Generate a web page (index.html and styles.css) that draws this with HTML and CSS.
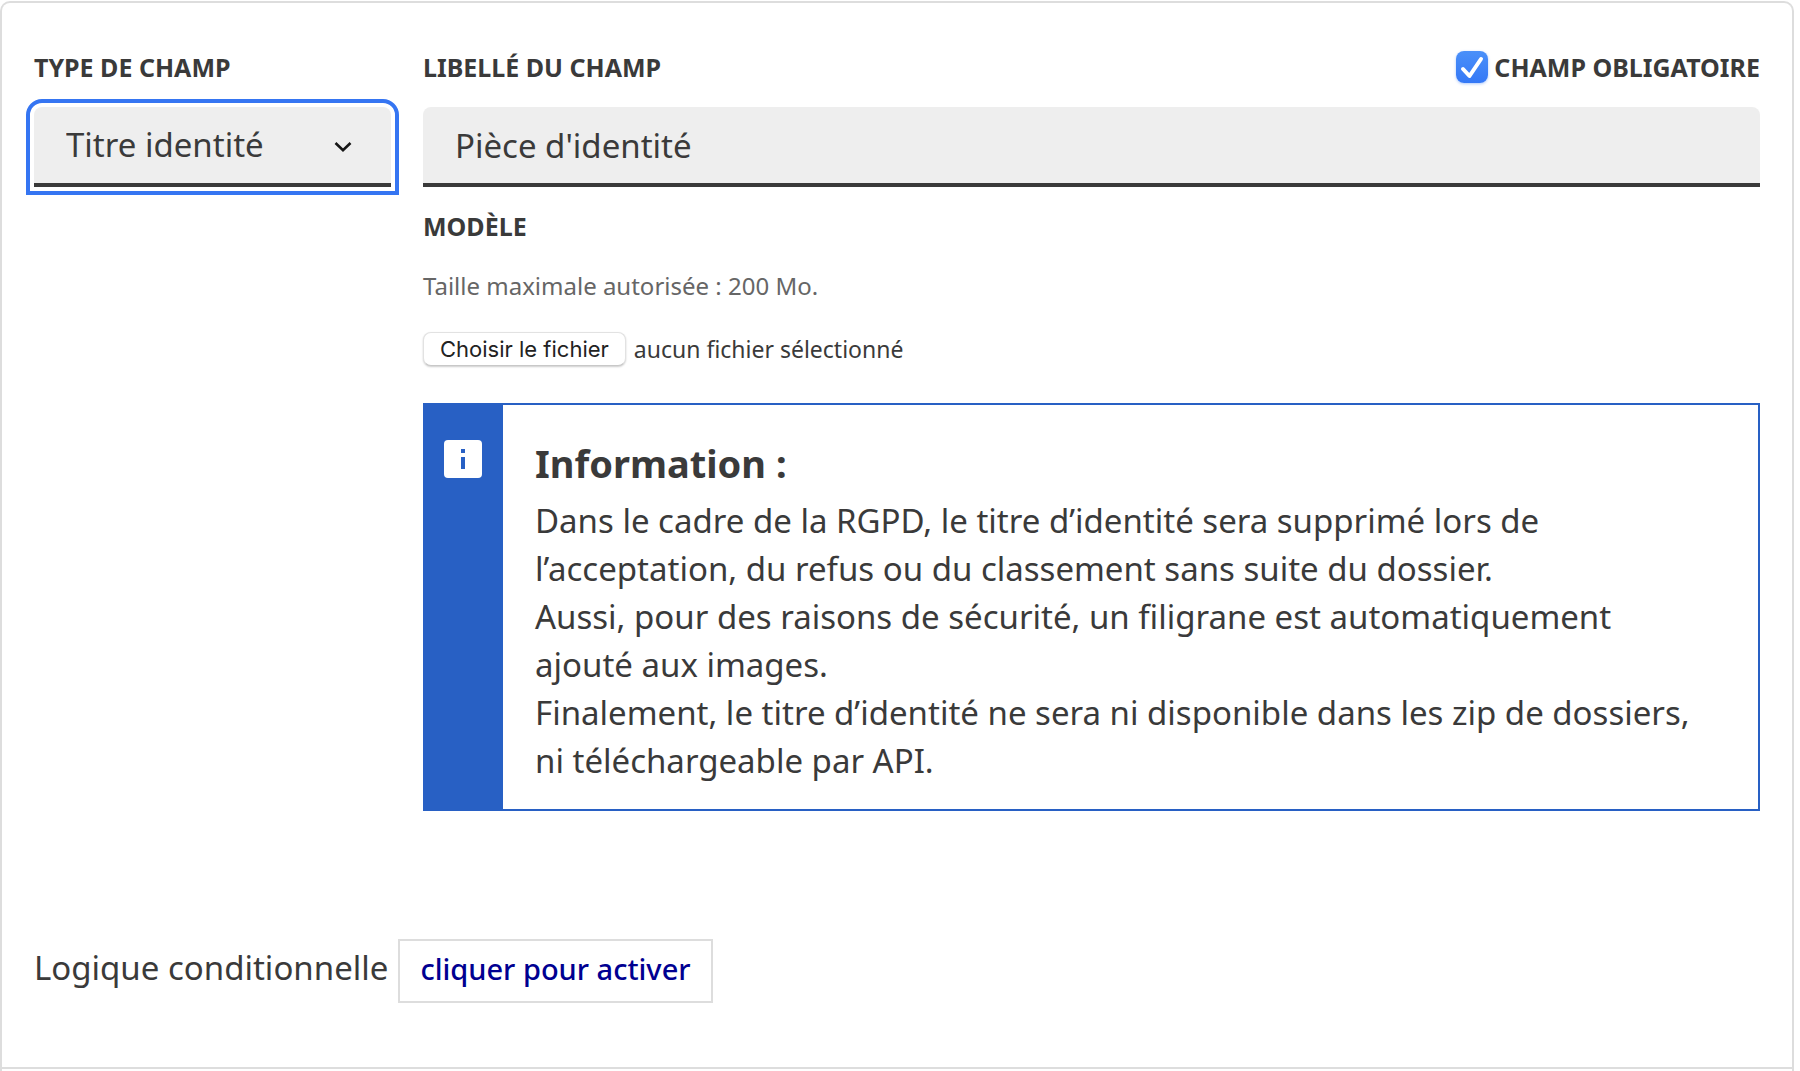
FILE: index.html
```html
<!DOCTYPE html>
<html lang="fr">
<head>
<meta charset="utf-8">
<meta name="viewport" content="width=device-width, initial-scale=1">
<title>Éditeur de champ</title>
<link rel="stylesheet" href="styles.css">
</head>
<body>
<form class="champ">
  <div class="champ-body">
    <div class="columns">
      <div class="column-type">
        <div class="label-row"><label class="label" for="type">Type de champ</label></div>
        <div class="select-wrap">
          <select class="field select" id="type">
            <option>Titre identité</option>
          </select>
          <svg class="chevron" viewBox="0 0 18 12" aria-hidden="true"><path d="M1.500 2L9 9.200 16.500 2" fill="none" stroke="#161616" stroke-width="2.600"/></svg>
        </div>
      </div>
      <div class="column-main">
        <div class="label-row">
          <label class="label" for="libelle">Libellé du champ</label>
          <div class="mandatory">
            <input class="checkbox" type="checkbox" id="obligatoire" checked>
            <label class="label" for="obligatoire">Champ obligatoire</label>
          </div>
        </div>
        <input class="field" type="text" id="libelle" value="Pièce d'identité">
        <label class="label label-model" for="modele">Modèle</label>
        <p class="hint">Taille maximale autorisée : 200 Mo.</p>
        <div class="file">
          <button class="file-button" type="button" id="modele">Choisir le fichier</button>
          <span class="file-status">aucun fichier sélectionné</span>
        </div>
        <section class="callout">
          <div class="callout-side">
            <svg class="callout-icon" viewBox="0 0 38 38" aria-hidden="true"><rect width="38" height="38" rx="4" fill="#fff"/><path d="M17 9h4v4h-4zM17 17h4v12h-4z" fill="#2860c4"/></svg>
          </div>
          <div class="callout-body">
            <h2 class="callout-title">Information :</h2>
            <p class="callout-text">Dans le cadre de la RGPD, le titre d’identité sera supprimé lors de l’acceptation, du refus ou du classement sans suite du dossier.<br>Aussi, pour des raisons de sécurité, un filigrane est automatiquement ajouté aux images.<br>Finalement, le titre d’identité ne sera ni disponible dans les zip de dossiers, ni téléchargeable par API.</p>
          </div>
        </section>
      </div>
    </div>
    <div class="logic">
      <span class="logic-label">Logique conditionnelle</span>
      <button class="logic-button" type="button">cliquer pour activer</button>
    </div>
  </div>
</form>
</body>
</html>
```
FILE: styles.css
```css
* {
  box-sizing: border-box;
}

body {
  margin: 0;
  padding: 1px 6px 0 0;
  background: #fff;
  color: #3a3a3a;
  font-family: "Noto Sans", sans-serif;
  font-size: 33px;
  line-height: 48px;
}

.champ {
  min-height: calc(100vh - 1px);
  border: 2px solid #ddd;
  border-bottom: 0;
  border-radius: 10px 10px 0 0;
}

.champ-body {
  padding: 48px 32px 64px;
  border-bottom: 2px solid #ddd;
}

.columns {
  display: grid;
  grid-template-columns: 357px 1fr;
  gap: 32px;
}

.column-main {
  display: flex;
  flex-direction: column;
  min-width: 0;
}

.label-row {
  display: flex;
  align-items: center;
  justify-content: space-between;
  height: 32px;
  margin-bottom: 24px;
}

.label {
  font-size: 25px;
  font-weight: 700;
  line-height: 32px;
  text-transform: uppercase;
}

.label-model {
  margin: 23px 0 28px;
}

.mandatory {
  display: flex;
  align-items: center;
  gap: 6px;
}

.checkbox {
  appearance: none;
  width: 32px;
  height: 32px;
  margin: 0;
  border-radius: 8px;
  background: linear-gradient(#4a90f9, #3478f6);
  box-shadow: 0 1px 3px #3478f666;
}

.checkbox:checked::before {
  content: "";
  display: block;
  width: 32px;
  height: 32px;
  background: url("data:image/svg+xml,%3Csvg xmlns='http://www.w3.org/2000/svg' viewBox='0 0 32 32'%3E%3Cpath d='M7 18l6.500 7L25 8' fill='none' stroke='white' stroke-width='4' stroke-linecap='round' stroke-linejoin='round'/%3E%3C/svg%3E");
}

.field {
  display: block;
  width: 100%;
  height: 80px;
  padding: 0 32px 4px;
  border: 0;
  border-radius: 8px 8px 0 0;
  background: #eee;
  box-shadow: inset 0 -4px #3a3a3a;
  color: #3a3a3a;
  font: inherit;
}

.select-wrap {
  display: grid;
  align-items: center;
}

.select-wrap > * {
  grid-area: 1 / 1;
}

.select {
  appearance: none;
  outline: 4px solid #3575f2;
  outline-offset: 4px;
}

.chevron {
  justify-self: end;
  width: 18px;
  height: 12px;
  margin-right: 39px;
  pointer-events: none;
}

.hint {
  margin: 0 0 30px;
  color: #666;
  font-size: 24px;
  line-height: 32px;
}

.file {
  display: flex;
  align-items: center;
  gap: 8px;
  margin-bottom: 37px;
  font-size: 23px;
  line-height: 32px;
}

.file-button {
  height: 34px;
  padding: 0 16px;
  border: 1px solid #e2e2e2;
  border-bottom-color: #c8c8c8;
  border-radius: 8px;
  background: #fff;
  box-shadow: 0 1px 2px #0003;
  color: #222;
  font: 22px/30px Inter, sans-serif;
}

.callout {
  display: flex;
  border: 2px solid #2860c4;
}

.callout-side {
  flex: none;
  width: 78px;
  padding: 35px 0 0 19px;
  background: #2860c4;
}

.callout-icon {
  display: block;
  width: 38px;
  height: 38px;
}

.callout-body {
  padding: 38px 48px 24px 32px;
}

.callout-title {
  margin: 0 0 14px;
  font-size: 38px;
  font-weight: 700;
  line-height: 40px;
}

.callout-text {
  margin: 0;
}

.logic {
  display: flex;
  align-items: center;
  gap: 10px;
  margin-top: 128px;
}

.logic-label {
  padding-bottom: 6px;
}

.logic-button {
  height: 64px;
  padding: 0 20px 4px;
  border: 2px solid #ddd;
  background: #fff;
  color: #000091;
  font: inherit;
  font-size: 29px;
  font-weight: 500;
}
```
